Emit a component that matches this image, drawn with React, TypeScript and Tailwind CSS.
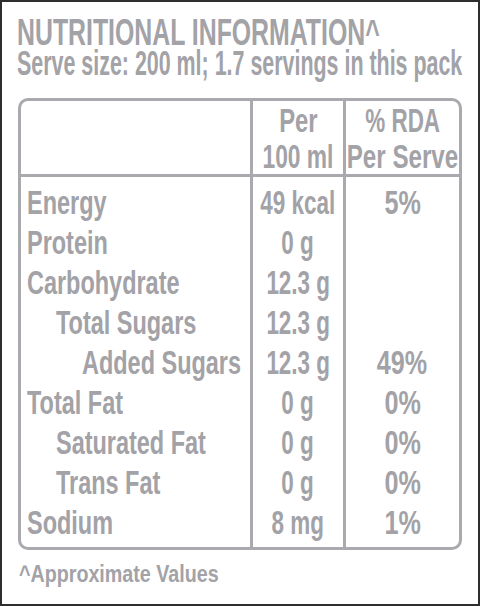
const rows = [
  { name: "Energy", indent: 0, per: "49 kcal", rda: "5%" },
  { name: "Protein", indent: 0, per: "0 g", rda: "" },
  { name: "Carbohydrate", indent: 0, per: "12.3 g", rda: "" },
  { name: "Total Sugars", indent: 1, per: "12.3 g", rda: "" },
  { name: "Added Sugars", indent: 2, per: "12.3 g", rda: "49%" },
  { name: "Total Fat", indent: 0, per: "0 g", rda: "0%" },
  { name: "Saturated Fat", indent: 1, per: "0 g", rda: "0%" },
  { name: "Trans Fat", indent: 1, per: "0 g", rda: "0%" },
  { name: "Sodium", indent: 0, per: "8 mg", rda: "1%" },
];

const indentClass = ["pl-[6px]", "pl-[35px]", "pl-[61px]"];

// the label uses a condensed face; squeeze Liberation Sans to get there
function Squeeze({ cls, children }: { cls: string; children: React.ReactNode }) {
  return <span className={`inline-block whitespace-nowrap ${cls}`}>{children}</span>;
}

export default function App() {
  return (
    <div className="w-[480px] h-[606px] border-2 border-[#2e2e2e] bg-white text-[#a2a2a7] font-bold font-['Liberation_Sans',Arial,sans-serif] overflow-hidden">
      <div className="pl-[15px] pt-[16px]">
        <h1 className="text-[36px] leading-[30px]">
          <Squeeze cls="origin-left scale-x-[0.69]">NUTRITIONAL INFORMATION^</Squeeze>
        </h1>
        <p className="text-[35px] leading-[30px]">
          <Squeeze cls="origin-left scale-x-[0.612]">Serve size: 200 ml; 1.7 servings in this pack</Squeeze>
        </p>
      </div>

      <div className="ml-[16px] mt-[20px] w-[444px] border-[3px] border-[#a9a9ae] rounded-[10px] text-[34px]">
        <div className="grid grid-cols-[229px_93px_116px] border-b-[3px] border-[#a9a9ae]">
          <div />
          <div className="border-l-[3px] border-[#a9a9ae] flex flex-col items-center leading-[36px] pt-[1px]">
            <Squeeze cls="origin-center scale-x-[0.7]">Per</Squeeze>
            <Squeeze cls="origin-center scale-x-[0.67]">100 ml</Squeeze>
          </div>
          <div className="border-l-[3px] border-[#a9a9ae] flex flex-col items-center leading-[36px] pt-[1px]">
            <Squeeze cls="origin-center scale-x-[0.66]">% RDA</Squeeze>
            <Squeeze cls="origin-center scale-x-[0.71]">Per Serve</Squeeze>
          </div>
        </div>
        <div className="grid grid-cols-[229px_93px_116px] leading-[40px]">
          <div className="py-[5px]">
            {rows.map((r) => (
              <div key={r.name} className={`h-[40px] ${indentClass[r.indent]}`}>
                <Squeeze cls="origin-left scale-x-[0.69]">{r.name}</Squeeze>
              </div>
            ))}
          </div>
          <div className="border-l-[3px] border-[#a9a9ae] py-[5px]">
            {rows.map((r) => (
              <div key={r.name} className="h-[40px] flex justify-center">
                <Squeeze cls="origin-center scale-x-[0.66]">{r.per}</Squeeze>
              </div>
            ))}
          </div>
          <div className="border-l-[3px] border-[#a9a9ae] py-[5px]">
            {rows.map((r) => (
              <div key={r.name} className="h-[40px] flex justify-center">
                <Squeeze cls="origin-center scale-x-[0.74]">{r.rda}</Squeeze>
              </div>
            ))}
          </div>
        </div>
      </div>

      <p className="pl-[17px] mt-[10px] text-[24px] leading-[28px]">
        <Squeeze cls="origin-left scale-x-[0.82]">^Approximate Values</Squeeze>
      </p>
    </div>
  );
}
